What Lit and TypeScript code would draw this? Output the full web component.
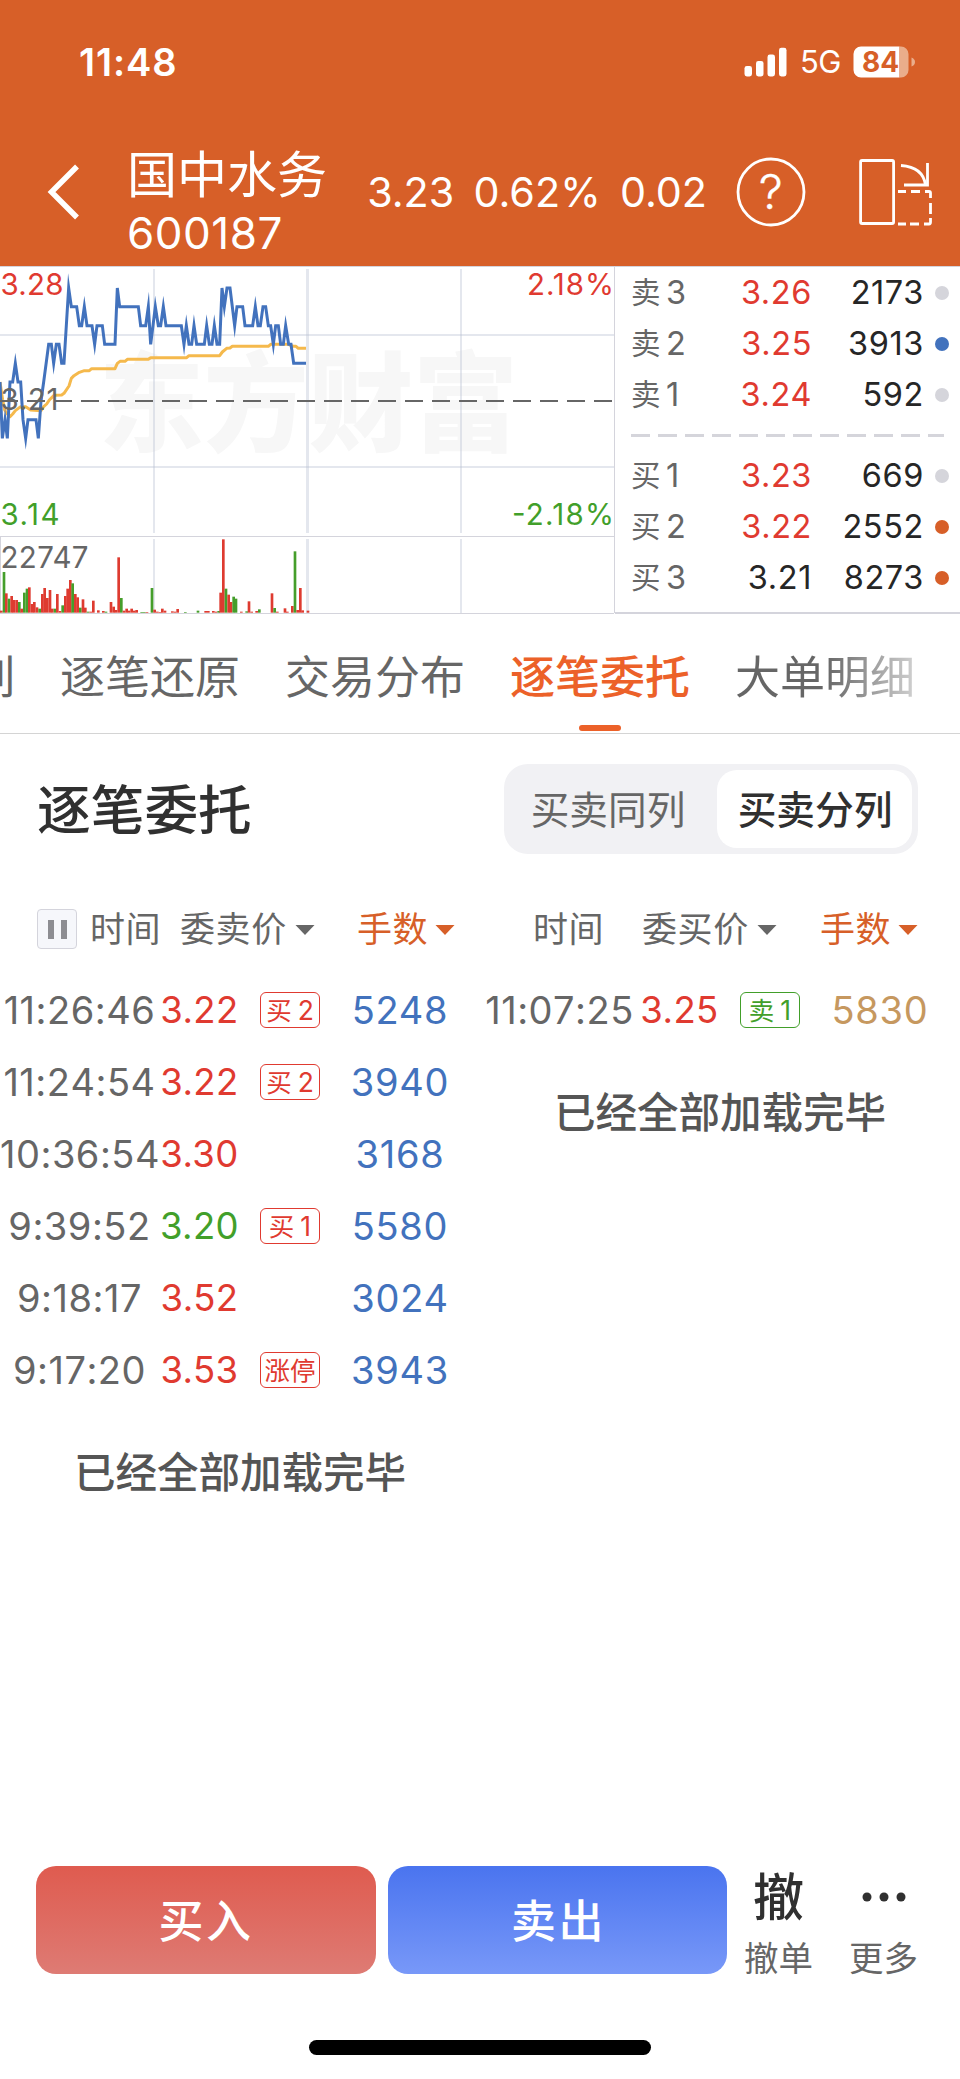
import { LitElement, html, css, svg } from "lit";
import { customElement, property } from "lit/decorators.js";
import { classMap } from "lit/directives/class-map.js";

type Tone = "up" | "down" | "flat";
interface Level { side: string; no: string; price: string; tone: Tone; qty: string; dot: string; }
interface Order { time: string; price: string; tone: Tone; badge?: string[]; qty: string; }

// Chart geometry is expressed in device pixels at 3x, relative to the chart origin.
const PRICE_LINE =
  "0,366 7,535 15,479 22,535 30,366 38,366 46,310 54,366 62,366 69,479 77,535 84,479 108,479 115,535 123,423 131,366 146,253 154,253 161,310 169,253 177,253 185,310 192,310 200,180 206,84 214,140 230,140 238,197 245,197 253,140 261,197 276,197 284,253 291,197 307,197 314,253 345,253 352,84 359,140 415,140 422,197 437,197 445,140 452,253 459,197 466,140 475,197 482,197 490,140 498,197 544,197 552,253 559,197 567,253 575,253 582,197 590,253 613,253 620,197 628,253 636,253 643,197 651,253 659,253 666,84 673,140 681,84 690,84 704,197 711,140 728,140 735,197 758,197 766,140 774,197 781,197 789,140 797,140 805,197 812,197 820,253 827,197 835,197 842,253 850,253 857,197 866,253 873,253 881,310 918,310";
const AVERAGE_LINE =
  "0,366 8,420 14,450 22,462 30,470 38,462 46,452 54,446 62,440 77,440 92,450 123,452 131,440 140,432 148,420 162,406 185,405 192,400 207,378 214,355 222,347 238,337 253,332 268,332 275,326 345,326 352,310 360,304 375,304 382,298 445,298 452,293 560,293 567,287 659,287 667,276 680,265 690,264 697,259 805,259 812,253 865,253 880,259 888,259 895,265 918,265";
const VOLUMES =
  "4:6r 12:122g 19:58r 27:42g 35:50r 42:38r 50:38r 58:32g 65:12r 73:60g 81:72g 88:76r 96:26r 103:32r 111:16r 119:12g 127:56r 134:74r 142:44r 150:68r 157:12r 165:12g 172:56r 180:5r 188:22g 196:50r 203:72r 211:98r 218:88g 226:56r 233:46r 241:15g 249:40r 256:15r 264:3g 272:3r 280:36r 295:7r 310:5r 318:3g 333:32r 341:18r 348:8r 356:166r 364:44g 372:6r 380:12r 387:6r 395:12r 403:6r 410:8r 425:2g 433:2g 441:2r 456:74g 464:9r 472:3r 480:2r 487:12r 495:6r 517:4r 525:3r 533:11r 556:2g 594:6g 617:5r 625:5r 640:5r 648:3r 656:5g 662:60r 670:220r 678:72g 686:54r 693:32r 701:48g 708:42g 724:3r 740:4g 747:34r 755:3r 770:5r 778:10g 816:58r 824:14g 832:3r 855:13r 862:3r 877:20r 885:184g 893:8r 901:74r 908:7r 924:6r"
    .split(" ")
    .map((s) => {
      const [x, rest] = s.split(":");
      return { x: Number(x), h: parseInt(rest, 10), up: rest.endsWith("r") };
    });

const shared = css`
  :host { display: block; font-family: Inter, "Noto Sans CJK SC", sans-serif; }
  .up { color: #e03a30; }
  .down { color: #429f2a; }
  .flat { color: #262626; }
`;

@customElement("status-bar")
class StatusBar extends LitElement {
  static styles = [shared, css`
    .bar { display: flex; align-items: center; height: 123px; padding: 0 45px 0 79px; color: #fff; }
    .time { flex: 1; font-size: 38px; line-height: 44px; font-weight: 600; letter-spacing: 0.9px; }
    .net { font-size: 31px; line-height: 36px; margin: 1px 12px 0 13px; letter-spacing: -0.5px; }
  `];
  render() {
    return html`<div class="bar">
      <span class="time">11:48</span>
      <svg width="43" height="30" viewBox="0 0 43 30" fill="#fff">
        <rect x="0.5" y="19" width="7.5" height="10.5" rx="2.4" /><rect x="12" y="14" width="7.5" height="15.5" rx="2.4" />
        <rect x="23.5" y="7.5" width="7.5" height="22" rx="2.4" /><rect x="35" y="0.8" width="7.5" height="28.7" rx="2.4" />
      </svg>
      <span class="net">5G</span>
      <svg width="62" height="32" viewBox="0 0 62 32">
        <path d="M8 0.5H46.500V31.500H8A7.500 7.500 0 0 1 0.500 24V8A7.500 7.500 0 0 1 8 0.500Z" fill="#fff" />
        <path d="M46.500 0.500H48A7.500 7.500 0 0 1 55.500 8V24A7.500 7.500 0 0 1 48 31.500H46.500Z" fill="#eaad8b" />
        <path d="M58.500 11.500Q62 13 62 16T58.500 20.500Z" fill="#eaad8b" />
        <text x="27.500" y="26" text-anchor="middle" font-size="28" font-weight="700" fill="#d75f28">84</text>
      </svg>
    </div>`;
  }
}

@customElement("stock-header")
class StockHeader extends LitElement {
  static styles = [shared, css`
    .nav { display: flex; align-items: center; height: 143px; padding: 0 27px 6px 47px; color: #fff; box-sizing: border-box; }
    .nav svg { flex: none; }
    .name { width: 202px; margin: 26px 0 0 47px; white-space: nowrap; }
    .title { font-size: 50px; line-height: 58px; }
    .code { font-size: 44px; line-height: 59px; letter-spacing: 0.5px; }
    .quote { display: flex; width: 343px; margin: 0 29px 0 40px; font-size: 41.300px; line-height: 50px; justify-content: space-between; white-space: nowrap; }
    .rotate { margin-left: 53px; }
  `];
  render() {
    return html`<div class="nav">
      <svg width="33" height="58" viewBox="0 0 33 58"><path d="M30 3.500L4.500 29L30 54.500" fill="none" stroke="#fff" stroke-width="5.500" /></svg>
      <div class="name"><div class="title">国中水务</div><div class="code">600187</div></div>
      <div class="quote"><span>3.23</span><span>0.62%</span><span>0.02</span></div>
      <svg width="70" height="70" viewBox="0 0 70 70">
        <circle cx="35" cy="35" r="33" fill="none" stroke="#fff" stroke-width="2.800" />
        <text x="34.800" y="52" text-anchor="middle" font-size="48" font-weight="300" fill="#fff" stroke="#fff" stroke-width="0.300">?</text>
      </svg>
      <svg class="rotate" width="74" height="68" viewBox="0 0 74 68" fill="none" stroke="#fff" stroke-width="2.800">
        <rect x="1.600" y="2.500" width="33" height="63" rx="1.500" />
        <path d="M42 7.500Q64 9 66.500 27" /><path d="M68.500 5V27H45" />
        <path d="M39 33.500H47M52 33.500H61M66 33.500H70Q71.500 33.500 71.500 35V40M71.500 45V56M71.500 60V64Q71.500 66 70 66H65M60 66H51M47 66H39" />
      </svg>
    </div>`;
  }
}

@customElement("minute-chart")
class MinuteChart extends LitElement {
  static styles = [shared, css`svg { display: block; }`];
  render() {
    return html`<svg width="615" height="349" viewBox="0 0 615 349">
      <text x="99" y="177" font-size="108" font-weight="900" textLength="419" lengthAdjust="spacingAndGlyphs" fill="#f7f7f7">东方财富</text>
      <g fill="#b8bfd3" fill-opacity="0.38">
        <rect x="153" y="3" width="2" height="264" /><rect x="306" y="3" width="3" height="264" /><rect x="460" y="3" width="2" height="264" />
        <rect x="153" y="273" width="2" height="74" /><rect x="306" y="273" width="3" height="74" /><rect x="460" y="273" width="2" height="74" />
        <rect x="0" y="68" width="614" height="2" /><rect x="0" y="200" width="614" height="2" />
      </g>
      <path d="M0 0.500H615M0 270.500H614M0 347.500H614M614.500 0V347M0.500 270V347" stroke="#d4d4dc" fill="none" />
      <g transform="translate(0 -6) scale(0.33333)">
        ${VOLUMES.map((v) => svg`<rect x=${v.x - 4} y=${1058 - v.h} width="8" height=${v.h} fill=${v.up ? "#de3b30" : "#459e2b"} />`)}
        <polyline points=${AVERAGE_LINE} fill="none" stroke="#f5b94c" stroke-width="9" stroke-linejoin="round" />
        <polyline points=${PRICE_LINE} fill="none" stroke="#4272bd" stroke-width="9" stroke-miterlimit="10" />
      </g>
      <path d="M0 135H614" stroke="#666" stroke-width="2" stroke-dasharray="18 9" />
      <g font-size="29.500">
        <text x="0.500" y="29" textLength="63" fill="#e03a30">3.28</text>
        <text x="0.500" y="144" textLength="58" fill="#666">3.21</text>
        <text x="0.500" y="259" textLength="59" fill="#429f2a">3.14</text>
        <text x="527" y="29" textLength="87" fill="#e03a30">2.18%</text>
        <text x="512" y="259" textLength="102" fill="#429f2a">-2.18%</text>
        <text x="0.500" y="302" textLength="88" fill="#666">22747</text>
      </g>
    </svg>`;
  }
}

@customElement("order-book")
class OrderBook extends LitElement {
  static levels: Level[] = [
    { side: "卖", no: "3", price: "3.26", tone: "up", qty: "2173", dot: "none" },
    { side: "卖", no: "2", price: "3.25", tone: "up", qty: "3913", dot: "blue" },
    { side: "卖", no: "1", price: "3.24", tone: "up", qty: "592", dot: "none" },
    { side: "买", no: "1", price: "3.23", tone: "up", qty: "669", dot: "none" },
    { side: "买", no: "2", price: "3.22", tone: "up", qty: "2552", dot: "orange" },
    { side: "买", no: "3", price: "3.21", tone: "flat", qty: "8273", dot: "orange" },
  ];
  static styles = [shared, css`
    .book { height: 348px; box-sizing: border-box; border-top: 1px solid #d4d4dc; border-bottom: 2px solid #d4d4dc; }
    .row { display: grid; grid-template-columns: 34px 42px 105px 112px 11px 14px; height: 51px; align-items: center; padding-left: 16px; font-size: 32.500px; line-height: 51px; letter-spacing: 0.6px; }
    .side, .no { color: #666; }
    .side { font-size: 29.500px; }
    .no { padding-left: 1px; }
    .price, .qty { text-align: right; }
    .qty { color: #262626; }
    .dot { grid-column: 6; width: 14px; height: 14px; border-radius: 50%; background: #d5d5db; }
    .blue { background: #4272bd; }
    .orange { background: #d75f28; }
    .sep { display: block; margin: 14px 0 13px 16px; }
  `];
  private row(l: Level) {
    return html`<div class="row"><span class="side">${l.side}</span><span class="no">${l.no}</span>
      <span class="price ${l.tone}">${l.price}</span><span class="qty">${l.qty}</span>
      <span class=${classMap({ dot: true, blue: l.dot === "blue", orange: l.dot === "orange" })}></span></div>`;
  }
  render() {
    const l = OrderBook.levels;
    return html`<div class="book">${l.slice(0, 3).map((x) => this.row(x))}
      <svg class="sep" width="313" height="3"><path d="M0 1.500H313" stroke="#d5d5db" stroke-width="3" stroke-dasharray="19 8" /></svg>
      ${l.slice(3).map((x) => this.row(x))}</div>`;
  }
}

@customElement("detail-tabs")
class DetailTabs extends LitElement {
  static styles = [shared, css`
    .tabs { display: flex; gap: 45px; height: 119px; box-sizing: content-box; border-bottom: 1px solid #d4d4d4; overflow: hidden;
      font-size: 45px; line-height: 128px; color: #666; white-space: nowrap; padding-left: 15px; }
    .clip { width: 0; display: flex; justify-content: flex-end; }
    .tab { width: 180px; display: flex; flex-direction: column; align-items: center; height: 119px; }
    .active { color: #ec6129; font-weight: 500; }
    .mark { width: 42px; height: 6px; border-radius: 3px; background: #ec6129; margin-top: -17px; flex: none; }
    .fade span { background: linear-gradient(90deg, #666 50%, #d0d0d0 100%); background-clip: text; -webkit-background-clip: text; color: transparent; }
  `];
  render() {
    return html`<div class="tabs"><div class="clip">列</div>
      <div class="tab">逐笔还原</div><div class="tab">交易分布</div>
      <div class="tab active">逐笔委托<i class="mark"></i></div>
      <div class="tab fade"><span>大单明细</span></div></div>`;
  }
}

@customElement("order-column")
class OrderColumn extends LitElement {
  @property() priceLabel = "";
  @property({ type: Boolean }) pausable = false;
  @property({ type: Boolean }) highlight = false;
  @property({ attribute: false }) orders: Order[] = [];
  static styles = [shared, css`
    .head { display: flex; align-items: center; height: 50px; color: #666; font-size: 35px; line-height: 51px; white-space: nowrap; padding-left: 53px; }
    .paused { padding-left: 37px; }
    .pause { width: 38px; height: 38px; border: 1px solid #d4d4dc; border-radius: 4px; background: #f6f7fb; display: flex; align-items: center; justify-content: center; gap: 7px; margin-right: 13px; }
    .pause i { width: 6px; height: 19px; background: #8d8d92; }
    .text { display: flex; align-items: center; letter-spacing: 0.6px; }
    .t { width: 109px; }
    .paused .t { width: 90px; }
    .p { width: 178px; }
    .paused .p { width: 177px; }
    .s { color: #d75f28; }
    .head svg { margin: 2px 0 0 7px; }
    .p svg { margin-left: 8px; }
    .list { margin-top: 20px; }
    .row { display: grid; grid-template-columns: 159px 81px 100px 120px; height: 72px; align-items: center; text-align: center; font-size: 38px; line-height: 71px; white-space: nowrap; }
    .time { color: #666; font-kerning: none; letter-spacing: 0.5px; padding-top: 1px; }
    .price { font-size: 36.500px; padding-top: 1px; letter-spacing: 0.4px; }
    .badge { justify-self: center; width: 58px; height: 34px; border: 1px solid currentColor; border-radius: 6px; font-size: 25.500px; line-height: 35px; box-sizing: content-box; display: flex; justify-content: center; gap: 6px; }
    .badge b { font-weight: 400; font-size: 26.500px; }
    .qty { color: #4272bd; padding-top: 1px; letter-spacing: 0.7px; }
    .gold { color: #c6985f; }
    .end { height: 134px; line-height: 134px; text-align: center; font-size: 41.500px; font-weight: 500; color: #555; }
  `];
  render() {
    const arrow = (c: string) => html`<svg width="20" height="10" viewBox="0 0 20 10"><path d="M0.500 0H19.500L10 10Z" fill=${c} /></svg>`;
    return html`<div class=${classMap({ head: true, paused: this.pausable })}>
        ${this.pausable ? html`<span class="pause"><i></i><i></i></span>` : ""}
        <span class="text t">时间</span><span class="text p">${this.priceLabel}${arrow("#666")}</span><span class="text s">手数${arrow("#d75f28")}</span>
      </div>
      <div class="list">${this.orders.map((o) => html`<div class="row">
        <span class="time">${o.time}</span><span class="price ${o.tone}">${o.price}</span>
        ${o.badge
          ? html`<span class="badge ${o.badge[0] === "卖" ? "down" : "up"}"><span>${o.badge[0]}</span>${o.badge[1] ? html`<b>${o.badge[1]}</b>` : ""}</span>`
          : html`<span></span>`}
        <span class=${classMap({ qty: true, gold: this.highlight })}>${o.qty}</span></div>`)}
        <div class="end">已经全部加载完毕</div></div>`;
  }
}

@customElement("trade-bar")
class TradeBar extends LitElement {
  static styles = [shared, css`
    .bar { display: flex; align-items: flex-start; padding-left: 36px; height: 174px; white-space: nowrap; }
    .btn { width: 340px; height: 108px; border-radius: 20px; color: #fff; font-size: 45px; font-weight: 500; line-height: 111px; text-align: center; letter-spacing: 2.500px; }
    .buy { background: linear-gradient(#df5b4f, #de7b74); margin-right: 12px; }
    .sell { background: linear-gradient(#4a74ef, #7898f8); width: 339px; text-indent: 2px; }
    .act { width: 105px; text-align: center; color: #666; margin-top: 3px; }
    .cancel { margin-left: -1px; }
    .glyph { height: 62px; line-height: 58px; font-size: 51px; color: #303030; font-weight: 500; display: flex; justify-content: center; }
    .label { font-size: 34.500px; line-height: 55px; }
    .home { width: 342px; height: 15px; border-radius: 8px; background: #000; margin: 0 auto; }
  `];
  render() {
    return html`<div class="bar">
        <div class="btn buy">买入</div><div class="btn sell">卖出</div>
        <div class="act cancel"><div class="glyph">撤</div><div class="label">撤单</div></div>
        <div class="act"><div class="glyph"><svg width="44" height="58" viewBox="0 0 44 58" fill="#303030"><circle cx="5" cy="28" r="4.500" /><circle cx="22" cy="28" r="4.500" /><circle cx="39" cy="28" r="4.500" /></svg></div><div class="label">更多</div></div>
      </div>
      <div class="home"></div>`;
  }
}

@customElement("app-root")
class AppRoot extends LitElement {
  static styles = [shared, css`
    :host { width: 960px; height: 2079px; overflow: hidden; background: #fff; }
    .page { display: flex; flex-direction: column; height: 2079px; }
    .top { background: #d75f28; height: 266px; }
    .market { display: grid; grid-template-columns: 615px 345px; height: 348px; }
    .section { display: flex; justify-content: space-between; align-items: center; padding: 30px 42px 0 37px; }
    .section h2 { margin: 3px 0 0; font-size: 53.700px; line-height: 87px; font-weight: 500; color: #303030; }
    .seg { display: flex; width: 414px; height: 90px; border-radius: 24px; background: #f1f1f4; padding: 6px; box-sizing: border-box; font-size: 38.700px; line-height: 80px; color: #666; text-align: center; }
    .seg div { width: 207px; box-sizing: border-box; padding-right: 11px; }
    .seg .on { width: 195px; background: #fff; border-radius: 20px; color: #303030; font-weight: 500; padding: 0 0 0 1px; height: 78px; }
    .cols { display: grid; grid-template-columns: 480px 480px; margin-top: 50px; flex: 1; }
    trade-bar { height: 213px; }
  `];
  private sells: Order[] = [
    { time: "11:26:46", price: "3.22", tone: "up", badge: ["买", "2"], qty: "5248" },
    { time: "11:24:54", price: "3.22", tone: "up", badge: ["买", "2"], qty: "3940" },
    { time: "10:36:54", price: "3.30", tone: "up", qty: "3168" },
    { time: "9:39:52", price: "3.20", tone: "down", badge: ["买", "1"], qty: "5580" },
    { time: "9:18:17", price: "3.52", tone: "up", qty: "3024" },
    { time: "9:17:20", price: "3.53", tone: "up", badge: ["涨停"], qty: "3943" },
  ];
  private buys: Order[] = [{ time: "11:07:25", price: "3.25", tone: "up", badge: ["卖", "1"], qty: "5830" }];
  render() {
    return html`<div class="page">
      <div class="top"><status-bar></status-bar><stock-header></stock-header></div>
      <div class="market"><minute-chart></minute-chart><order-book></order-book></div>
      <detail-tabs></detail-tabs>
      <div class="section"><h2>逐笔委托</h2><div class="seg"><div>买卖同列</div><div class="on">买卖分列</div></div></div>
      <div class="cols">
        <order-column priceLabel="委卖价" pausable .orders=${this.sells}></order-column>
        <order-column priceLabel="委买价" highlight .orders=${this.buys}></order-column>
      </div>
      <trade-bar></trade-bar>
    </div>`;
  }
}
